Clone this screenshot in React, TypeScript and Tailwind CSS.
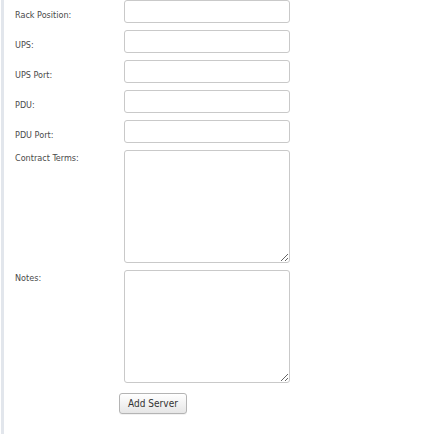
import React from 'react';

const inputRows = ['Rack Position:', 'UPS:', 'UPS Port:', 'PDU:', 'PDU Port:'];
const areaRows = ['Contract Terms:', 'Notes:'];

export default function App() {
  return (
    <div className="min-h-[434px] bg-white pl-px font-['DejaVu_Sans_Condensed','Liberation_Sans',sans-serif] text-[#4a4a4a]">
      <div className="min-h-[434px] border-l-[3px] border-[#e2e6ec]">
        {inputRows.map((label) => (
          <div key={label} className="flex h-[30px]">
            <div className="w-[120px] pl-[11px] pt-[9px] text-[9px] leading-[12px]">{label}</div>
            <input
              type="text"
              className="h-[23px] w-[166px] rounded-[3px] border border-[#c9c9c9] bg-white outline-none"
            />
          </div>
        ))}
        {areaRows.map((label) => (
          <div key={label} className="flex h-[120px]">
            <div className="w-[120px] pl-[11px] pt-[2px] text-[9px] leading-[12px]">{label}</div>
            <textarea className="h-[113px] w-[166px] rounded-[3px] border border-[#c9c9c9] bg-white outline-none" />
          </div>
        ))}
        <div className="pl-[115px]">
          <button
            type="button"
            className="h-[21px] w-[68px] rounded-[3px] border border-[#b4b4b4] bg-gradient-to-b from-white to-[#e6e6e6] text-[10px] text-[#333] shadow-[0_1px_0_rgba(0,0,0,0.05)]"
          >
            Add Server
          </button>
        </div>
      </div>
    </div>
  );
}
